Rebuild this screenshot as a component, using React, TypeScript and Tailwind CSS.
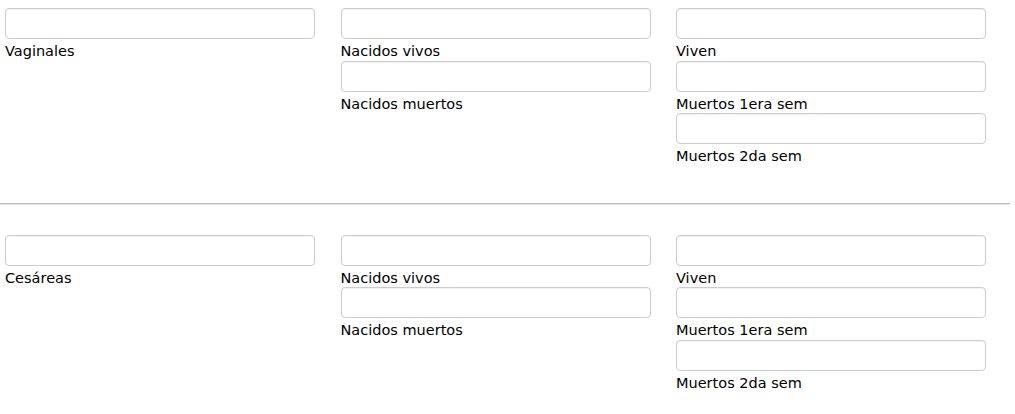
import React from "react";

type Field = { label: string };

const groups: { main: string; middle: Field[]; right: Field[] }[] = [
  {
    main: "Vaginales",
    middle: [{ label: "Nacidos vivos" }, { label: "Nacidos muertos" }],
    right: [{ label: "Viven" }, { label: "Muertos 1era sem" }, { label: "Muertos 2da sem" }],
  },
  {
    main: "Cesáreas",
    middle: [{ label: "Nacidos vivos" }, { label: "Nacidos muertos" }],
    right: [{ label: "Viven" }, { label: "Muertos 1era sem" }, { label: "Muertos 2da sem" }],
  },
];

function InputField({ label }: Field) {
  return (
    <div className="flex flex-col">
      <input
        type="text"
        className="h-[31px] w-full rounded-[4px] border border-[#cccccc] bg-white px-2 outline-none shadow-[inset_0_1px_1px_rgba(0,0,0,0.06)]"
      />
      <label className="block h-[21.5px] pt-[3px] text-[14.5px] leading-[19px] text-black">
        {label}
      </label>
    </div>
  );
}

function Column({ fields }: { fields: Field[] }) {
  return (
    <div className="flex w-[310px] flex-col">
      {fields.map((f, i) => (
        <InputField key={i} label={f.label} />
      ))}
    </div>
  );
}

export default function App() {
  return (
    <div
      className="w-[1010px] bg-white pt-[8px]"
      style={{ fontFamily: '"DejaVu Sans", "Noto Sans", sans-serif' }}
    >
      {groups.map((g, gi) => (
        <div key={gi}>
          {gi > 0 && (
            <hr className="mt-[37px] mb-[30px] border-0 border-t border-b border-t-[#bdbdbd] border-b-[#e8e8e8]" />
          )}
          <div className="flex gap-x-[25.5px] pl-[5px]">
            <Column fields={[{ label: g.main }]} />
            <Column fields={g.middle} />
            <Column fields={g.right} />
          </div>
        </div>
      ))}
    </div>
  );
}
